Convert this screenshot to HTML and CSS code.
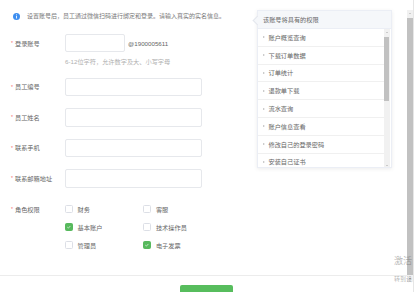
FILE: index.html
```html
<!DOCTYPE html>
<html lang="zh">
<head>
<meta charset="utf-8">
<title>添加员工</title>
<link rel="stylesheet" href="styles.css">
</head>
<body>
<div class="page">
  <div class="body">
    <div class="notice">
      <svg class="info-icon" viewBox="0 0 8 8" width="7" height="7"><circle cx="4" cy="4" r="4" fill="#3d8ef0"/><rect x="3.5" y="3.3" width="1" height="3" fill="#fff"/><rect x="3.5" y="1.6" width="1" height="1" fill="#fff"/></svg>
      <span>设置账号后，员工通过微信扫码进行绑定和登录。请输入真实的实名信息。</span>
    </div>

    <div class="row row-first">
      <div class="label"><span class="req">*</span>登录账号</div>
      <div class="field"><span class="input input-short"></span><span class="suffix">@1900005611</span></div>
    </div>
    <div class="hint">6-12位字符，允许数字及大、小写字母</div>

    <div class="row row-tight">
      <div class="label"><span class="req">*</span>员工编号</div>
      <div class="field"><span class="input"></span></div>
    </div>
    <div class="row">
      <div class="label"><span class="req">*</span>员工姓名</div>
      <div class="field"><span class="input"></span></div>
    </div>
    <div class="row">
      <div class="label"><span class="req">*</span>联系手机</div>
      <div class="field"><span class="input"></span></div>
    </div>
    <div class="row">
      <div class="label"><span class="req">*</span>联系邮箱地址</div>
      <div class="field"><span class="input"></span></div>
    </div>

    <div class="row row-roles">
      <div class="label label-roles"><span class="req">*</span>角色权限</div>
      <div class="checks">
        <div class="check"><span class="box"></span>财务</div>
        <div class="check"><span class="box"></span>客服</div>
        <div class="check"><span class="box box-on"><svg viewBox="0 0 8 8" width="8" height="8"><path d="M1.8 4.1 L3.4 5.6 L6.3 2.5" fill="none" stroke="#fff" stroke-width="0.9"/></svg></span>基本账户</div>
        <div class="check"><span class="box"></span>技术操作员</div>
        <div class="check"><span class="box"></span>管理员</div>
        <div class="check"><span class="box box-on"><svg viewBox="0 0 8 8" width="8" height="8"><path d="M1.8 4.1 L3.4 5.6 L6.3 2.5" fill="none" stroke="#fff" stroke-width="0.9"/></svg></span>电子发票</div>
      </div>
    </div>
  </div>

  <div class="footer">
    <button class="btn" type="button" aria-label="确定"></button>
  </div>

  <div class="popover">
    <div class="pop-head">该账号将具有的权限</div>
    <div class="pop-body">
      <ul class="pop-list">
        <li class="pop-item"><span class="caret"></span>账户概览查询</li>
        <li class="pop-item"><span class="caret"></span>下载订单数据</li>
        <li class="pop-item"><span class="caret"></span>订单统计</li>
        <li class="pop-item"><span class="caret"></span>退款单下载</li>
        <li class="pop-item"><span class="caret"></span>流水查询</li>
        <li class="pop-item"><span class="caret"></span>账户信息查看</li>
        <li class="pop-item"><span class="caret"></span>修改自己的登录密码</li>
        <li class="pop-item"><span class="caret"></span>安装自己证书</li>
      </ul>
      <div class="sbar sbar-pop">
        <span class="sb-up"></span>
        <span class="sb-thumb sb-thumb-pop"></span>
        <span class="sb-fill"></span>
        <span class="sb-down"></span>
      </div>
    </div>
  </div>

  <div class="sbar sbar-page">
    <span class="sb-up"></span>
    <span class="sb-thumb sb-thumb-page"></span>
    <span class="sb-down sb-down-dark"></span>
  </div>

  <div class="watermark">
    <div class="wm-big">激活</div>
    <div class="wm-small">转到设</div>
  </div>
</div>
</body>
</html>
```

FILE: styles.css
```css
* { box-sizing: border-box; }

html, body {
  margin: 0;
  padding: 0;
  background: #fff;
}

body {
  width: 415px;
  height: 292px;
  overflow: hidden;
  font-family: "Liberation Sans", "Noto Sans CJK SC", sans-serif;
  font-size: 6.2px;
  color: #666;
}

.page {
  position: relative;
  width: 414px;
  height: 292px;
  border-right: 1px solid #e6e6e6;
}

.body {
  height: 275px;
  padding-top: 12px;
  display: flex;
  flex-direction: column;
}

.notice {
  height: 8px;
  display: flex;
  align-items: center;
  padding-left: 13px;
  color: #777;
  font-size: 6px;
  line-height: 8px;
}

.info-icon {
  display: block;
  margin-right: 7px;
}

.row {
  display: flex;
  align-items: center;
  height: 18.5px;
  margin-top: 12px;
  padding-left: 11px;
}

.row-first { margin-top: 14px; height: 18.4px; }
.row-tight { margin-top: 11.3px; }

.label {
  width: 54px;
  flex: none;
  display: flex;
  align-items: center;
  color: #666;
  white-space: nowrap;
}

.req {
  display: inline-block;
  width: 4px;
  color: #f56c6c;
  font-size: 5px;
}

.field {
  display: flex;
  align-items: center;
  height: 100%;
}

.input {
  display: block;
  width: 137px;
  height: 100%;
  border: 1px solid #e6e8ec;
  border-radius: 2px;
  background: #fff;
}

.input-short { width: 60px; }

.suffix {
  margin-left: 3px;
  color: #666;
}

.hint {
  margin-top: 6px;
  height: 8px;
  line-height: 8px;
  padding-left: 65px;
  color: #b0b0b0;
}

.row-roles {
  align-items: flex-start;
  height: auto;
  margin-top: 12.4px;
}

.label-roles {
  height: 18px;
}

.checks {
  display: grid;
  grid-template-columns: 78.3px 80px;
  grid-auto-rows: 18px;
}

.check {
  display: flex;
  align-items: center;
  color: #666;
  white-space: nowrap;
}

.box {
  width: 7.6px;
  height: 7.6px;
  border: 1px solid #dcdfe6;
  border-radius: 1.5px;
  margin-right: 5px;
  display: flex;
  align-items: center;
  justify-content: center;
  background: #fff;
}

.box-on {
  background: #57b95d;
  border-color: #57b95d;
}

.box svg { display: block; }

.footer {
  border-top: 1px solid #ececec;
  display: flex;
  justify-content: center;
  padding-top: 9px;
  padding-right: 1px;
}

.btn {
  width: 53px;
  height: 20px;
  border: 0;
  border-radius: 2px;
  background: #57bd5d;
  padding: 0;
}

/* popover */
.popover {
  position: absolute;
  left: 256.5px;
  top: 10px;
  width: 135.5px;
  height: 158px;
  background: #fff;
  border: 1px solid #ebeef5;
  box-shadow: 0 1px 4px rgba(0, 0, 0, 0.08);
  display: flex;
  flex-direction: column;
}

.popover::before {
  content: "";
  position: absolute;
  left: -4px;
  top: 6px;
  width: 6px;
  height: 6px;
  background: #f5f7fa;
  border-left: 1px solid #e4e7ed;
  border-bottom: 1px solid #e4e7ed;
  transform: rotate(45deg);
}

.pop-head {
  height: 18px;
  line-height: 17px;
  padding-left: 5.5px;
  background: #f5f7fa;
  border-bottom: 1px solid #ebeef5;
  color: #666;
  flex: none;
  position: relative;
}

.pop-body {
  flex: 1;
  display: flex;
  overflow: hidden;
  min-height: 0;
}

.pop-list {
  list-style: none;
  margin: 0;
  padding: 0;
  flex: 1;
}

.pop-item {
  height: 17.8px;
  display: flex;
  align-items: center;
  padding-left: 5px;
  border-bottom: 1px solid #f0f0f0;
  color: #666;
  white-space: nowrap;
}

.caret {
  width: 0;
  height: 0;
  border-top: 1.6px solid transparent;
  border-bottom: 1.6px solid transparent;
  border-left: 2px solid #bbb;
  margin-right: 4px;
}

/* scrollbars */
.sbar {
  display: flex;
  flex-direction: column;
  align-items: center;
  background: #f1f1f1;
  width: 6px;
}

.sbar-pop {
  flex: none;
  margin-right: 1.5px;
  height: 139.5px;
}

.sbar-page {
  position: absolute;
  left: 407px;
  top: 10px;
  height: 272px;
}

.sb-up, .sb-down {
  flex: none;
  height: 7px;
  width: 6px;
  display: flex;
  align-items: center;
  justify-content: center;
}

.sb-up::before {
  content: "";
  border-left: 1.5px solid transparent;
  border-right: 1.5px solid transparent;
  border-bottom: 1.6px solid #a3a3a3;
}

.sb-down::before {
  content: "";
  border-left: 1.5px solid transparent;
  border-right: 1.5px solid transparent;
  border-top: 1.6px solid #a3a3a3;
}

.sb-down-dark::before { border-top-color: #505050; }

.sb-thumb {
  width: 5px;
  background: #c1c1c1;
  flex: none;
}

.sb-thumb-pop {
  margin-top: 1px;
  height: 64px;
}

.sb-thumb-page {
  margin-top: 1px;
  height: 257px;
  width: 6px;
}

.sb-fill { flex: 1; }

.watermark {
  position: absolute;
  left: 394px;
  top: 254px;
  color: rgba(120, 120, 120, 0.55);
  pointer-events: none;
  white-space: nowrap;
}

.wm-big {
  font-size: 9px;
  line-height: 14px;
}

.wm-small {
  font-size: 6px;
  line-height: 8px;
  margin-top: 7px;
}
```
